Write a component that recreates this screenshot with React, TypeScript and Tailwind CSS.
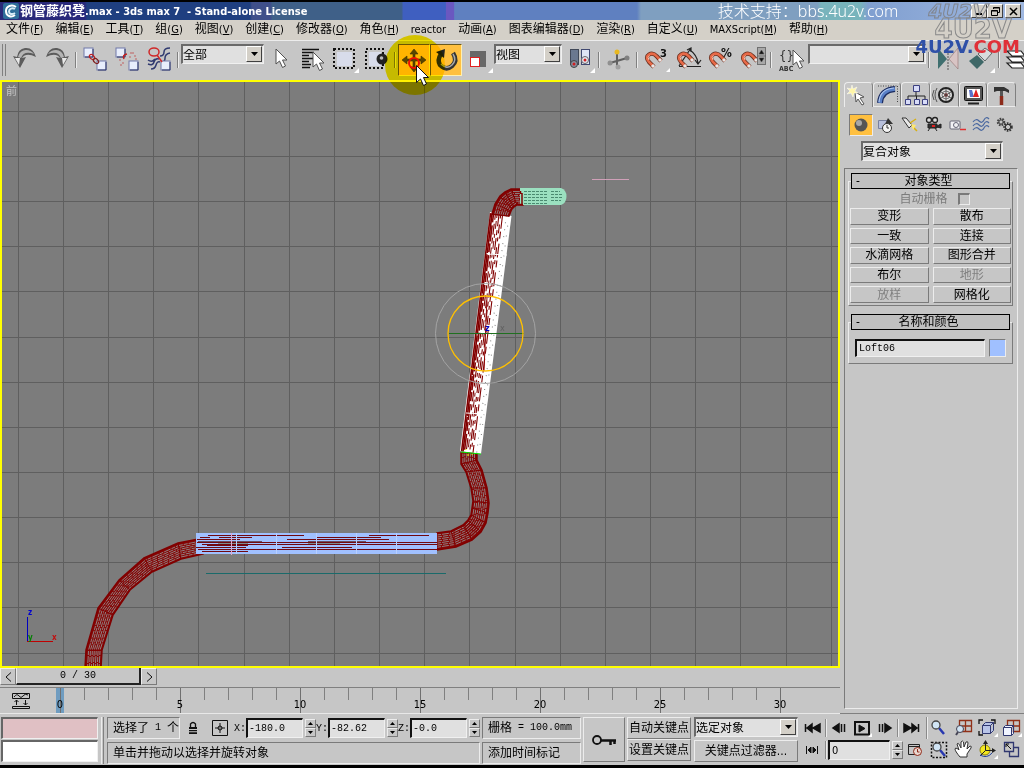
import React from 'react';
import type { ReactNode } from 'react';

type Pt = [number, number];

const raised = 'border border-t-[#ececec] border-l-[#ececec] border-b-[#7a7a7a] border-r-[#7a7a7a]';
const sunken = 'border border-t-[#7a7a7a] border-l-[#7a7a7a] border-b-[#ececec] border-r-[#ececec]';
const field =
  'border-t-2 border-l-2 border-b border-r border-t-[#111] border-l-[#111] border-b-[#f0f0f0] border-r-[#f0f0f0] bg-[#e0e0e0]';

/* ---------- shared controls ---------- */

function Ico({ children, className = 'h-8 w-8', box = '0 0 32 32' }: { children: ReactNode; className?: string; box?: string }) {
  return (
    <svg viewBox={box} className={`block shrink-0 ${className}`} fill="none" aria-hidden="true">
      {children}
    </svg>
  );
}

function Drop({ label, value, className, arrow = 'w-4' }: { label: string; value: string; className: string; arrow?: string }) {
  return (
    <div className={`relative shrink-0 ${className}`}>
      <select
        aria-label={label}
        className="block h-full w-full appearance-none border-t-2 border-l-2 border-r border-b border-t-[#6a6a6a] border-l-[#6a6a6a] border-r-[#f0f0f0] border-b-[#f0f0f0] bg-[#e0e0e0] text-xs leading-none text-black"
      >
        <option>{value}</option>
      </select>
      <span
        className={`pointer-events-none absolute top-0.5 right-0.5 bottom-0.5 flex items-center justify-center border border-t-white border-l-white border-r-[#404040] border-b-[#404040] bg-[#d4d0c8] ${arrow}`}
      >
        <Ico className="h-1 w-[7px]" box="0 0 7 4">
          <path d="M0 0h7L3.5 4z" fill="#000" />
        </Ico>
      </span>
    </div>
  );
}

function Spinner({ label }: { label: string }) {
  return (
    <span className="flex h-[18px] w-[11px] shrink-0 flex-col">
      <button aria-label={`${label} +`} className={`flex flex-1 items-center justify-center ${raised}`}>
        <Ico className="h-[3px] w-[5px]" box="0 0 5 3">
          <path d="M0 3h5L2.5 0z" fill="#000" />
        </Ico>
      </button>
      <button aria-label={`${label} -`} className={`flex flex-1 items-center justify-center ${raised}`}>
        <Ico className="h-[3px] w-[5px]" box="0 0 5 3">
          <path d="M0 0h5L2.5 3z" fill="#000" />
        </Ico>
      </button>
    </span>
  );
}

/* ---------- title and menu ---------- */

function TitleBar() {
  return (
    <header className="relative flex h-[18px] shrink-0 items-center bg-[linear-gradient(90deg,#2a2a78_0%,#28287c_8.3%,#1f3f80_8.5%,#1f3f80_24.4%,#3f4f8a_24.6%,#3f4f8a_26.4%,#3f6088_26.6%,#3f6088_39.2%,#3f5fc0_39.4%,#3f5fc0_43.5%,#6a58c0_43.6%,#6a58c0_44.3%,#5f80c0_44.4%,#5f80c0_62.2%,#7f9fc0_62.6%,#7f9fc0_79.8%,#78b4bc_80.2%,#78b4bc_84%,#809fd0_84.8%,#a0b8e0_100%)] pl-[3px]">
      <Ico className="h-4 w-4" box="0 0 16 16">
        <rect width="16" height="16" rx="2" fill="#2f6f9a" />
        <path d="M13 4C9 1 3 3 3 8s5 7 9 4" stroke="#fff" strokeWidth="2" />
        <path d="M12 6C9 4 6 6 6 8.500s3 3.500 6 1.500" stroke="#d6ecf6" strokeWidth="2" />
      </Ico>
      <h1 className="pl-px text-[11px] font-bold whitespace-pre text-white">
        <span className="text-[13px]">钢管藤织凳</span>.max - 3ds max 7  - Stand-alone License
      </h1>
      <p className="absolute top-0 left-[70.100%] font-['Noto_Sans','Noto_Sans_CJK_SC',sans-serif] text-base leading-[18px] font-light whitespace-nowrap text-white">
        技术支持：bbs.4u2v.com
      </p>
      <div className="ml-auto flex items-center pr-[3px]">
        <button aria-label="最小化" className="flex h-3.5 w-4 items-end justify-center border border-t-white border-l-white border-r-[#404040] border-b-[#404040] bg-[#d4d0c8] pb-0.5">
          <span className="h-0.5 w-1.5 bg-black" />
        </button>
        <button aria-label="还原" className="flex h-3.5 w-4 items-center justify-center border border-t-white border-l-white border-r-[#404040] border-b-[#404040] bg-[#d4d0c8]">
          <Ico className="h-[9px] w-[9px]" box="0 0 9 9">
            <path d="M2.500 2V.5h6v5H7M2.500 1h6M.5 3.500h6v5h-6zM.5 4h6" stroke="#000" />
          </Ico>
        </button>
        <button aria-label="关闭" className="ml-0.5 flex h-3.5 w-4 items-center justify-center border border-t-white border-l-white border-r-[#404040] border-b-[#404040] bg-[#d4d0c8]">
          <Ico className="h-[9px] w-[9px]" box="0 0 9 9">
            <path d="M1 1l7 7M8 1L1 8" stroke="#000" strokeWidth="1.500" />
          </Ico>
        </button>
      </div>
    </header>
  );
}

const menus: [string, string][] = [
  ['文件', 'F'],
  ['编辑', 'E'],
  ['工具', 'T'],
  ['组', 'G'],
  ['视图', 'V'],
  ['创建', 'C'],
  ['修改器', 'O'],
  ['角色', 'H'],
  ['reactor', ''],
  ['动画', 'A'],
  ['图表编辑器', 'D'],
  ['渲染', 'R'],
  ['自定义', 'U'],
  ['MAXScript', 'M'],
  ['帮助', 'H'],
];

function MenuBar() {
  return (
    <nav className="flex h-5 shrink-0 items-center gap-3 bg-[#d4d0c8] pl-1.5">
      {menus.map(([name, key]) => (
        <button key={name} className="text-[11px] whitespace-nowrap">
          <span className={/^[a-z]/i.test(name) ? '' : 'text-xs'}>{name}</span>
          {key && (
            <>
              (<u>{key}</u>)
            </>
          )}
        </button>
      ))}
    </nav>
  );
}

function Watermark() {
  return (
    <div className="pointer-events-none absolute top-0 right-1 z-20 flex flex-col items-end font-['DejaVu_Sans',sans-serif] font-bold" aria-hidden="true">
      <span className="pr-8 text-[20px] leading-[18px] text-transparent italic [-webkit-text-stroke:1px_#80848c]">4U2V</span>
      <span className="pr-2 text-[26px] leading-[19px] text-transparent [-webkit-text-stroke:1px_#8a8a8a]">4U2V</span>
      <span className="text-[18px] leading-[15px] text-[#2f50a8]">
        4U2V.<span className="text-[#e03038]">COM</span>
      </span>
    </div>
  );
}

/* ---------- main toolbar ---------- */

function Tool({ label, children, active = false }: { label: string; children: ReactNode; active?: boolean }) {
  return (
    <button
      aria-label={label}
      className={active ? 'flex h-8 w-8 shrink-0 items-center justify-center border border-t-[#6a5a20] border-l-[#6a5a20] border-r-[#fff0b0] border-b-[#fff0b0] bg-[#ffc040]' : 'h-8 w-8 shrink-0'}
    >
      {children}
    </button>
  );
}

function Sep() {
  return (
    <span className="flex h-8 w-1.5 shrink-0 items-center justify-center">
      <span className="h-4 w-0.5 border-l border-l-[#808080] border-r border-r-[#ececec]" />
    </span>
  );
}

const Flyout = () => <path d="M31 24v5h-5z" fill="#fff" />;

const Arrow = ({ x, y }: { x: number; y: number }) => (
  <path d={`M${x} ${y}v15l3.500-3 3 6.500 3-1.500-3-6h4.500z`} fill="#fff" stroke="#505050" />
);

const Box = ({ x, y }: { x: number; y: number }) => (
  <>
    <rect x={x} y={y} width="9" height="9" fill="#e8eefc" stroke="#7078a8" />
    <path d={`M${x + 9} ${y + 1}v8h-8`} stroke="#30386a" />
  </>
);

const Magnet = () => (
  <>
    <path d="M14 23L9 18Q5 13 9 10.500Q13 8 17 12.500L21 17" stroke="#6a3020" strokeWidth="4.200" />
    <path d="M14 23L9 18Q5 13 9 10.500Q13 8 17 12.500L21 17" stroke="#e86a48" strokeWidth="2.600" />
    <path d="M9 16Q7 13 9.500 11.500" stroke="#ffb8a0" />
    <path d="M14 23l-2-2M21 17l-2-2" stroke="#e8e8e8" strokeWidth="3" />
  </>
);

const CurlArrow = () => (
  <>
    <path d="M4 12l7 12 6-11-4 1Q17 8 27 13Q24 3 16 4Q9 5 8 13z" fill="#5c5c5c" />
    <path d="M9 13Q11 6 17 6Q22 6 25 10Q15 6 12 14" fill="#b4b4b4" />
    <path d="M6 14l4 7 1-7z" fill="#e8e8e8" />
  </>
);

function Toolbar() {
  return (
    <div role="toolbar" className="flex h-10 shrink-0 items-start overflow-hidden border-t border-[#ececec] bg-[#c6c6c6] pt-[3px]">
      <span className="mr-[3px] ml-0.5 h-8 w-1 shrink-0 border-x border-[#808080]" />
      <Tool label="撤销">
        <Ico>
          <CurlArrow />
        </Ico>
      </Tool>
      <Tool label="重做">
        <Ico>
          <g transform="translate(32 0) scale(-1 1)">
            <CurlArrow />
          </g>
        </Ico>
      </Tool>
      <Sep />
      <Tool label="选择并链接">
        <Ico>
          <Box x={5} y={4} />
          <Box x={18} y={17} />
          <ellipse cx="13" cy="13" rx="3" ry="2" transform="rotate(45 13 13)" stroke="#c02020" strokeWidth="1.300" />
          <ellipse cx="17" cy="17" rx="3" ry="2" transform="rotate(45 17 17)" stroke="#802020" strokeWidth="1.300" />
        </Ico>
      </Tool>
      <Tool label="断开链接">
        <Ico>
          <Box x={5} y={4} />
          <Box x={18} y={17} />
          <path d="M16 10q-5 1-3 5" stroke="#c02020" strokeWidth="1.500" />
          <path d="M19 9h2M23 12h2M18 13h2M22 8v2M8 16h2M11 19h2M9 21h2M24 15h2" stroke="#c06060" />
        </Ico>
      </Tool>
      <Tool label="绑定到空间扭曲">
        <Ico>
          <path d="M27 4q-6 0-6 4t-4 4M27 9q-5 1-5 5t-3 4M5 16q4 3 7-1M5 20q5 2 6-2t5-3M8 25q4 0 5-4t4-3" stroke="#303a70" strokeWidth="1.500" />
          <Box x={18} y={17} />
          <ellipse cx="11" cy="8" rx="5" ry="4" stroke="#d02828" strokeWidth="1.500" />
          <path d="M14 11l5 7" stroke="#d02828" strokeWidth="1.500" />
        </Ico>
      </Tool>
      <Sep />
      <Drop label="选择过滤器" value="全部" className="h-5 w-[83px]" />
      <Tool label="选择对象">
        <Ico>
          <Arrow x={12} y={5} />
        </Ico>
      </Tool>
      <Tool label="按名称选择">
        <Ico>
          <path d="M6 5.500h17M6 8.500h12M6 11.500h7M6 14.500h11M6 17.500h7M6 20.500h9M6 23.500h8" stroke="#111" strokeWidth="1.400" />
          <Arrow x={17} y={8} />
        </Ico>
      </Tool>
      <Tool label="矩形选择区域">
        <Ico>
          <rect x="9" y="8" width="15" height="14" fill="#d8dcea" />
          <rect x="6" y="5" width="20" height="19" stroke="#111" strokeWidth="2" strokeDasharray="2 2" />
          <Flyout />
        </Ico>
      </Tool>
      <Tool label="窗口/交叉">
        <Ico>
          <rect x="9" y="8" width="12" height="14" fill="#d8dcea" />
          <rect x="6" y="5" width="17" height="19" stroke="#111" strokeWidth="2" strokeDasharray="2 2" />
          <circle cx="22" cy="15" r="5.500" fill="#222" />
          <circle cx="21.500" cy="14" r="1.800" fill="#bbb" />
        </Ico>
      </Tool>
      <Sep />
      <Tool label="选择并移动" active>
        <Ico className="h-[30px] w-[30px]" box="0 0 30 30">
          <path d="M15 4l4 5h-3v5h6v-3l5 4-5 4v-3h-6v6h3l-4 5-4-5h3v-6H8v3l-5-4 5-4v3h6V9h-3z" fill="#5a4a10" stroke="#3c3408" strokeWidth=".6" />
          <circle cx="15" cy="18" r="5" stroke="#f01010" strokeWidth="2" />
        </Ico>
      </Tool>
      <Tool label="选择并旋转" active>
        <Ico className="h-[30px] w-[30px]" box="0 0 30 30">
          <path d="M22 8q5 8-1 13t-12-1q-3-5 1-11" stroke="#333" strokeWidth="4.500" />
          <path d="M22 9q4 6-1 11t-11-1" stroke="#a8a8a8" strokeWidth="1.500" />
          <path d="M5 7l9-3-1 9z" fill="#222" />
        </Ico>
      </Tool>
      <Tool label="选择并缩放">
        <Ico>
          <rect x="8" y="7" width="16" height="16" fill="#686868" />
          <rect x="8.500" y="13.500" width="9" height="9" fill="#fff" stroke="#e02020" />
          <Flyout />
        </Ico>
      </Tool>
      <Drop label="参考坐标系" value="视图" className="h-5 w-[68px]" />
      <span className="w-0.5 shrink-0" />
      <Tool label="使用轴点中心">
        <Ico>
          <rect x="6.500" y="5.500" width="8" height="15" fill="#6a7890" stroke="#404858" />
          <rect x="17.500" y="5.500" width="8" height="15" fill="#dfe4f4" stroke="#404870" />
          <circle cx="10" cy="20" r="3.500" fill="#8890a0" stroke="#444" />
          <circle cx="21" cy="16" r="3.500" fill="#e8e8f4" stroke="#666" />
          <circle cx="10" cy="20" r="1.500" fill="#d02020" />
          <circle cx="21" cy="16" r="1.500" fill="#d02020" />
          <Flyout />
        </Ico>
      </Tool>
      <Sep />
      <Tool label="选择并操纵">
        <Ico>
          <path d="M15 8v16M8 19l17-5" stroke="#606060" strokeWidth="2" />
          <circle cx="15" cy="8" r="2.500" fill="#e8b820" />
          <circle cx="8" cy="19" r="2.500" fill="#909090" />
          <circle cx="25" cy="14" r="2.500" fill="#808080" />
          <circle cx="16" cy="23" r="2.500" fill="#a0a0a0" />
        </Ico>
      </Tool>
      <Sep />
      <Tool label="捕捉开关">
        <Ico>
          <Magnet />
          <text x="20" y="13" fontSize="11" fontWeight="bold" fill="#111">
            3
          </text>
          <path d="M30 24v4h-4z" fill="#fff" />
        </Ico>
      </Tool>
      <Tool label="角度捕捉">
        <Ico>
          <path d="M7 22L19 4M7 22.500h22M18 6q7 5 8 13M15 6l4-2v4M23 16l3 4 3-4" stroke="#222" strokeWidth="1.200" />
          <Magnet />
        </Ico>
      </Tool>
      <Tool label="百分比捕捉">
        <Ico>
          <Magnet />
          <text x="17" y="13" fontSize="12" fontWeight="bold" fill="#111">
            %
          </text>
        </Ico>
      </Tool>
      <Tool label="微调器捕捉">
        <Ico>
          <Magnet />
          <rect x="21.500" y="3.500" width="8" height="17" fill="#a8a8a8" stroke="#707070" />
          <path d="M23 10l2.500-4 2.500 4zM23 14l2.500 4 2.500-4zM22 12h8" fill="#111" stroke="#555" strokeWidth=".6" />
        </Ico>
      </Tool>
      <Sep />
      <Tool label="编辑命名选择集">
        <Ico>
          <text x="5" y="16" fontSize="13" fill="#333">
            {'{}'}
          </text>
          <text x="5" y="27" fontSize="7" fontWeight="bold" fill="#333">
            ABC
          </text>
          <Arrow x={19} y={6} />
        </Ico>
      </Tool>
      <span className="w-0.5 shrink-0" />
      <Drop label="命名选择集" value="" className="h-5 w-[118px]" />
      <Sep />
      <Tool label="镜像">
        <Ico>
          <path d="M6 4v21l9-10z" fill="#3f6f6f" />
          <path d="M26 4v21l-9-10z" fill="#d8c4c4" stroke="#907070" strokeWidth=".6" />
          <path d="M16 3v24" stroke="#555" strokeDasharray="2 1" />
        </Ico>
      </Tool>
      <Tool label="对齐">
        <Ico>
          <path d="M5 17l8-6 7 7-7 7z" fill="#3f6868" />
          <path d="M14 10l7-6 7 5-7 8z" fill="#d8dcdc" stroke="#606868" />
          <Flyout />
        </Ico>
      </Tool>
      <Sep />
      <Tool label="层管理器">
        <Ico>
          <path d="M5 7h14l4 5H10zM5 13h14l4 5H10zM5 19h14l4 5H10z" fill="#fff" stroke="#222" strokeWidth="1.200" />
        </Ico>
      </Tool>
    </div>
  );
}

/* ---------- viewport scene ---------- */

const lerp = (a: Pt, b: Pt, t: number): Pt => [a[0] + (b[0] - a[0]) * t, a[1] + (b[1] - a[1]) * t];
const toPoints = (pts: Pt[]) => pts.map((p) => p.join(',')).join(' ');

function Tube({ outer, inner }: { outer: Pt[]; inner: Pt[] }) {
  const gaps = [0.16, 0.28, 0.4, 0.52, 0.64, 0.76, 0.88];
  return (
    <g>
      <polygon points={toPoints([...outer, ...[...inner].reverse()])} fill="#850505" stroke="#800000" strokeWidth="1.500" />
      {gaps.map((t, i) => (
        <polyline
          key={t}
          points={toPoints(outer.map((p, k) => lerp(p, inner[k], t)))}
          fill="none"
          stroke="#908080"
          strokeDasharray={i % 2 ? '5 1' : '4 1 7 1'}
        />
      ))}
      {outer.map((p, k) => (
        <line key={k} x1={p[0]} y1={p[1]} x2={inner[k][0]} y2={inner[k][1]} stroke="#800000" />
      ))}
    </g>
  );
}

const leftOuter: Pt[] = [[85, 668], [86, 650], [98, 608], [119, 580], [144, 558], [178, 543], [198, 539]];
const leftInner: Pt[] = [[101, 668], [102, 650], [113, 615], [130, 590], [152, 572], [181, 559], [203, 554]];
const bendOuter: Pt[] = [[437, 550], [456, 547], [472, 540], [481, 532], [486, 523], [488, 513], [489, 503], [487, 488], [482, 470], [477, 460], [477, 453]];
const bendInner: Pt[] = [[437, 533], [451, 531], [463, 525], [468, 520], [471, 515], [472, 508], [473, 501], [471, 488], [466, 472], [461, 464], [461, 453]];
const topOuter: Pt[] = [[492, 214], [495, 204], [500, 196], [505, 192], [511, 189], [522, 189]];
const topInner: Pt[] = [[509, 216], [511, 211], [512, 209], [514, 207], [517, 205], [523, 205]];

const gridX = [18, 63, 108, 153, 198, 244, 289, 334, 379, 424, 469, 515, 560, 605, 650, 695, 740, 786, 831];
const gridY = [111, 156, 201, 246, 291, 337, 382, 427, 472, 517, 562, 607, 653];

const whiteStrands: [number, string, string][] = [
  [0.03, '#800000', ''],
  [0.1, '#800000', '40 1'],
  [0.17, '#850505', '9 3 16 2'],
  [0.26, '#800000', '6 4 11 3'],
  [0.34, '#8a2020', '4 3 8 5'],
  [0.43, '#800000', '12 4 5 3'],
  [0.51, '#800000', '4 6 9 4'],
  [0.6, '#800000', '14 3 7 5'],
  [0.78, '#8a8a8a', '1 6'],
  [0.9, '#8a8a8a', '1 9'],
];

const blueStrands: [number, number, number][] = [
  [208, 304, 535.5], [369, 429, 535.5], [200, 210, 537.5], [219, 252, 537.5], [316, 381, 537.5],
  [197, 240, 539.5], [287, 389, 539.5], [198, 262, 541.5], [308, 366, 541.5], [197, 437, 542.5],
  [202, 437, 544.5], [207, 248, 545.5], [196, 246, 547.5], [282, 352, 547.5], [198, 437, 549.5], [202, 248, 551.5],
];

function Viewport() {
  return (
    <section aria-label="前视图" className="relative min-h-0 flex-1 border-2 border-[#ffff00] bg-[#7c7c7c]">
      <svg viewBox="2 82 836 584" preserveAspectRatio="xMidYMid slice" className="absolute inset-0 h-full w-full" fill="none">
        <path
          d={gridX.map((x) => `M${x + 0.5} 82V666`).join('') + gridY.map((y) => `M2 ${y + 0.5}H838`).join('')}
          stroke="#5f5f5f"
        />
        <text x="6" y="95" fontSize="11" fill="#c4c4c4">
          前
        </text>
        <path d="M592 179.500h37" stroke="#d0a0b8" />
        <path d="M206 573.500h240" stroke="#1a6a6a" />

        <Tube outer={leftOuter} inner={leftInner} />
        <Tube outer={bendOuter} inner={bendInner} />

        <rect x="196" y="533" width="241" height="21" fill="#a0c0ff" />
        {blueStrands.map(([a, b, y]) => (
          <path key={`${a}-${y}`} d={`M${a} ${y}H${b}`} stroke={y === 541.5 ? '#6a5060' : '#700810'} />
        ))}
        <path d="M218 543.500h30M308 543.500h32" stroke="#7c8c8c" />
        <path d="M236.500 533v21M276.500 533v21M316.500 533v21M356.500 533v21M396.500 533v21" stroke="#b8d0ff" />
        <path d="M231.500 533v22" stroke="#e0a8d0" />

        <polygon points="490,212 511.500,216 481,454 460,451" fill="#fff" />
        {whiteStrands.map(([t, color, dash]) => {
          const a = lerp([490, 213], [511, 216], t);
          const b = lerp([461, 451], [481, 454], t);
          return <line key={t} x1={a[0]} y1={a[1]} x2={b[0]} y2={b[1]} stroke={color} strokeWidth={t < 0.2 ? 1.6 : 1.1} strokeDasharray={dash} />;
        })}
        <path d="M487 254l20 1M466 413l19 1" stroke="#fff" />
        <path d="M461 452l20 2" stroke="#00f000" />
        <path d="M466 449v1M468 454v2M472 454v1" stroke="#f0f000" />

        <Tube outer={topOuter} inner={topInner} />
        <path d="M520 188h41q5.500 2 5.500 8.500t-5.500 8.500h-41z" fill="#9be0c0" />
        <path d="M524 191.500h24M524 194.500h24M524 197.500h24M524 200.500h24M524 203.500h24" stroke="#4a8a70" strokeDasharray="3 1" />
        <path d="M551 191.500h9M551 194.500h12M551 197.500h12M551 200.500h10" stroke="#4a8a70" strokeDasharray="3 1" />
        <path d="M520.500 191v3M522 193v11M518 204.500h5" stroke="#800000" strokeWidth="1.500" />

        <circle cx="485.5" cy="333.5" r="50" stroke="#a4a4a4" />
        <path d="M487 297L484 371" stroke="#900808" />
        <path d="M449 333.500h75" stroke="#207020" />
        <circle cx="485.5" cy="333.5" r="37.500" stroke="#ffc000" strokeWidth="1.300" />
        <text x="500" y="331" fontSize="9" fill="#606060">
          x
        </text>
        <text x="485" y="331" fontSize="9" fontWeight="bold" fill="#0000c0">
          z
        </text>

        <path d="M27.500 617v25" stroke="#0000c0" />
        <path d="M27 641.500h26" stroke="#c00000" />
        <g fontSize="8" fontWeight="bold">
          <text x="28" y="615" fill="#0000d0">
            z
          </text>
          <text x="28" y="640" fill="#008000">
            y
          </text>
          <text x="52" y="640" fill="#c01010">
            x
          </text>
        </g>
      </svg>
    </section>
  );
}

function TrackBar() {
  const frames = Array.from({ length: 31 }, (_, i) => i);
  return (
    <div className="shrink-0 bg-[#c6c6c6]">
      <div className="flex h-[19px] items-start">
        <button aria-label="上一帧" className={`flex h-[17px] w-4 items-center justify-center ${raised}`}>
          <Ico className="h-2.5 w-[7px]" box="0 0 7 10">
            <path d="M6 .5L1 5l5 4.500" stroke="#111" />
          </Ico>
        </button>
        <button className="h-[17px] w-[125px] border-r-2 border-b-2 border-l border-r-[#222] border-b-[#222] border-l-[#ececec] font-['Liberation_Mono',monospace] text-[10px] leading-none whitespace-pre">
          0 / 30
        </button>
        <button aria-label="下一帧" className={`flex h-[17px] w-4 items-center justify-center ${raised}`}>
          <Ico className="h-2.5 w-[7px]" box="0 0 7 10">
            <path d="M1 .5L6 5 1 9.500" stroke="#111" />
          </Ico>
        </button>
      </div>
      <div className="relative flex h-[27px] border-t border-b border-t-[#808080] border-b-[#e8e8e8] px-12">
        <button aria-label="打开迷你曲线编辑器" className="absolute top-1 left-3">
          <Ico className="h-[18px] w-[18px]" box="0 0 18 18">
            <path d="M.5 1.500h17v5H.5zM2 5q3-4 5-1t4 0 5-1M.5 14.500h17v2H.5z" stroke="#111" />
            <path d="M4.500 13V8M2.500 10l2-2 2 2M13.500 8v5M11.500 11l2 2 2-2" stroke="#111" />
          </Ico>
        </button>
        {frames.map((f) => (
          <div key={f} className={`flex flex-1 justify-center ${f === 0 ? 'relative' : ''}`}>
            {f === 0 && <span className="absolute inset-y-0 w-2 bg-[#6f9cc0]" />}
            {f % 5 ? (
              <span className="h-3 w-px bg-[#808080]" />
            ) : (
              <span className="relative flex w-px justify-center bg-[#707070]">
                <span className="absolute bottom-0.5 font-['DejaVu_Sans_Condensed','DejaVu_Sans',sans-serif] text-[11px] leading-[13px]">{f}</span>
              </span>
            )}
          </div>
        ))}
      </div>
    </div>
  );
}

/* ---------- command panel ---------- */

const tabIcons: [string, ReactNode][] = [
  [
    '创建',
    <>
      <path d="M11 11l9 5-4 1 4 6-2 1-4-6-2 3z" fill="#fff" stroke="#555" />
      <path d="M8 4l1 4 4-2-2 4 3 2-4 0-1 4-2-4-4 1 3-3-3-3 4 1z" fill="#fff6a8" stroke="#fff" strokeWidth=".5" />
    </>,
  ],
  [
    '修改',
    <>
      <path d="M5 5h19M24.500 5v17" stroke="#444" strokeDasharray="1 1.500" />
      <path d="M7 22Q8 9 22 8" stroke="#1c2c60" strokeWidth="6" />
      <path d="M7 22Q8 9 22 8" stroke="#5a80c8" strokeWidth="3.500" />
      <path d="M6 21Q7 8 21 7" stroke="#b0c8f0" strokeWidth="1.200" />
    </>,
  ],
  [
    '层次',
    <>
      <path d="M14 10v5M6 19v-4h17v4M14.500 15v4" stroke="#222" />
      <path d="M11.500 4.500h6v6h-6zM3.500 18.500h5v5h-5zM12.500 18.500h5v5h-5zM20.500 18.500h5v5h-5z" fill="#d8dcf8" stroke="#3c4080" />
    </>,
  ],
  [
    '运动',
    <>
      <circle cx="16" cy="14" r="7" fill="#e0e0e0" stroke="#222" strokeWidth="2" />
      <circle cx="16" cy="14" r="4" stroke="#777" />
      <circle cx="16" cy="14" r="1.800" fill="#a02020" />
      <path d="M11 11l10 6M11 17l10-6M16 8v12" stroke="#444" strokeWidth=".8" />
      <path d="M7 7q-4 7 0 14M4 9q-3 5 0 10" stroke="#555" />
    </>,
  ],
  [
    '显示',
    <>
      <rect x="5.500" y="5.500" width="18" height="14" rx="1" fill="#555" stroke="#111" />
      <rect x="8" y="8" width="13" height="9" fill="#fff" />
      <path d="M10 9h3l2 7h-4z" fill="#5a70c8" />
      <path d="M17 8l3 8h-6z" fill="#e02020" />
      <path d="M9 22.500h11" stroke="#222" strokeWidth="2" />
    </>,
  ],
  [
    '工具',
    <>
      <path d="M6 6h10l5 3v3l-4-2H9L6 11z" fill="#333" />
      <path d="M13.500 10v6" stroke="#555" strokeWidth="3" />
      <path d="M13.500 15v9" stroke="#8c2a1a" strokeWidth="3.500" />
    </>,
  ],
];

const categories: [string, ReactNode][] = [
  [
    '几何体',
    <>
      <circle cx="11" cy="11" r="6.500" fill="#555" />
      <circle cx="9" cy="9" r="3" fill="#a8a8a8" />
    </>,
  ],
  [
    '图形',
    <>
      <path d="M4.500 6.500h9v8h-9z" fill="#b8c0dc" stroke="#7880a0" />
      <path d="M14 4l5 6h-8z" fill="#333" />
      <circle cx="13" cy="14" r="4.500" fill="#f4f4f4" stroke="#333" />
      <path d="M13 11v3h2" stroke="#333" />
    </>,
  ],
  [
    '灯光',
    <>
      <path d="M4 4l4 0 6 7-3 3z" fill="#e8e8e8" stroke="#333" />
      <path d="M12 9l6-4M14 12l5 5" stroke="#d8b010" strokeWidth="1.500" />
      <path d="M13 10l5 1-3 5z" fill="#ffe870" />
    </>,
  ],
  [
    '摄影机',
    <>
      <circle cx="7" cy="6" r="2.500" fill="#ddd" stroke="#222" strokeWidth="1.300" />
      <circle cx="13" cy="6" r="2.500" fill="#ddd" stroke="#222" strokeWidth="1.300" />
      <path d="M6 10h9v4H6zM15 12l4-2v4l-4-1M8 14l-2 3M13 14l2 3" fill="#333" stroke="#222" />
      <path d="M10 12h3" stroke="#e02020" strokeWidth="2" />
    </>,
  ],
  [
    '辅助对象',
    <>
      <rect x="4" y="7" width="10" height="8" rx="1" fill="#f0f0f4" stroke="#667" />
      <circle cx="10" cy="11" r="2.500" stroke="#667" />
      <path d="M14 15.500h6" stroke="#e03030" strokeWidth="1.500" />
    </>,
  ],
  [
    '空间扭曲',
    <path key="w" d="M3 8q3-4 6-1t5-1 5-1M3 12q3-4 6-1t5-1 5-1M3 16q3-4 6-1t5-1 5-1" stroke="#4a68a0" strokeWidth="1.200" />,
  ],
  [
    '系统',
    <>
      <circle cx="7" cy="8" r="3" stroke="#444" strokeWidth="2.500" strokeDasharray="1.500 1" />
      <circle cx="14" cy="13" r="3.500" stroke="#333" strokeWidth="2.500" strokeDasharray="1.500 1" />
      <circle cx="7" cy="8" r="2.200" stroke="#444" />
      <circle cx="14" cy="13" r="2.700" stroke="#333" />
    </>,
  ],
];

function Rollup({ title, children }: { title: string; children: ReactNode }) {
  return (
    <section className="relative">
      <div className={`mt-2 px-[3px] pt-2 pb-0.5 ${raised}`}>{children}</div>
      <button className="absolute top-0 right-[3px] left-[3px] flex h-4 items-center border border-black bg-[#c0c0c0] text-xs leading-none">
        <span className="w-3">-</span>
        <span className="flex-1 pr-4 text-center">{title}</span>
      </button>
    </section>
  );
}

const objectTypes: [string, boolean][] = [
  ['变形', true],
  ['散布', true],
  ['一致', true],
  ['连接', true],
  ['水滴网格', true],
  ['图形合并', true],
  ['布尔', true],
  ['地形', false],
  ['放样', false],
  ['网格化', true],
];

function CommandPanel() {
  return (
    <aside className="flex w-[184px] shrink-0 flex-col border-b border-[#808080] bg-[#c6c6c6] pt-0.5 pr-1.5 pb-1 pl-1">
      <div className="flex h-[25px] pr-0.5" role="tablist">
        {tabIcons.map(([name, icon], i) => (
          <button
            key={name}
            role="tab"
            aria-label={name}
            aria-selected={i === 0}
            className={
              i === 0
                ? 'flex flex-1 items-center justify-center rounded-t-sm border-t border-r border-l border-t-[#ececec] border-r-[#808080] border-l-[#ececec]'
                : 'flex flex-1 items-center justify-center rounded-t-sm border border-t-[#ececec] border-r-[#808080] border-b-[#ececec] border-l-[#ececec]'
            }
          >
            <Ico className="h-6 w-[26px]" box="1 2 26 24">
              {icon}
            </Ico>
          </button>
        ))}
      </div>
      <div className="mt-[7px] flex pl-[5px]">
        {categories.map(([name, icon], i) => (
          <button key={name} aria-label={name} className={i === 0 ? `flex h-[22px] w-6 items-center justify-center bg-[#ffc040] ${sunken}` : 'flex h-[22px] w-6 items-center justify-center'}>
            <Ico className="h-[22px] w-[22px]" box="0 0 22 22">
              {icon}
            </Ico>
          </button>
        ))}
      </div>
      <Drop label="对象类别" value="复合对象" className="mt-[5px] ml-[17px] h-5 w-[142px]" />
      <div className="mt-[7px] flex-1 border border-t-[#7a7a7a] border-r-[#ececec] border-b-[#ececec] border-l-[#7a7a7a] pt-1 pr-1 pl-[3px]">
        <div className="flex flex-col gap-2">
          <Rollup title="对象类型">
            <label className="flex h-[18px] items-center justify-center gap-2.5 pl-2 text-xs leading-none text-[#7c7c7c]">
              自动栅格
              <input type="checkbox" disabled className={`h-3 w-3 appearance-none ${sunken} border-t-2 border-l-2`} />
            </label>
            <div className="-mx-0.5 grid h-[95px] grid-cols-2 grid-rows-5 gap-x-1 gap-y-[3px]">
              {objectTypes.map(([name, on]) => (
                <button key={name} disabled={!on} className={`text-xs leading-none disabled:text-[#808080] ${raised}`}>
                  {name}
                </button>
              ))}
            </div>
          </Rollup>
          <Rollup title="名称和颜色">
            <div className="flex h-[30px] items-end justify-between px-[3px] pb-1">
              <input
                aria-label="名称"
                defaultValue="Loft06"
                className={`h-[18px] min-w-0 flex-1 ${field} pl-0.5 font-['Liberation_Mono',monospace] text-[10px] leading-none`}
              />
              <button aria-label="颜色" className={`ml-1 h-[18px] w-[17px] bg-[#a0c0ff] ${sunken}`} />
            </div>
          </Rollup>
        </div>
      </div>
    </aside>
  );
}

/* ---------- status bar ---------- */

function Coord({ axis, value }: { axis: string; value: string }) {
  return (
    <label className="flex w-[82px] items-center font-['Liberation_Mono',monospace] text-[10px]">
      <span className="w-3 text-right">{axis}:</span>
      <input defaultValue={value} className={`h-5 w-[57px] ${field} pl-px leading-none`} />
      <span className="w-0.5" />
      <Spinner label={axis} />
    </label>
  );
}

const playIcons: Record<string, ReactNode> = {
  转至开头: <path d="M1.500 2v8M8 2v8L3 6zM16 2v8L9 6zM8 6h8" fill="#111" stroke="#111" strokeWidth="1.500" />,
  上一帧: <path d="M8 2v8L2 6zM10.500 2v8M13.500 2v8" fill="#111" stroke="#111" strokeWidth="1.500" />,
  下一帧: <path d="M9 2v8l6-4zM6.500 2v8M3.500 2v8" fill="#111" stroke="#111" strokeWidth="1.500" />,
  转至结尾: <path d="M15.500 2v8M9 2v8l5-4zM1 2v8l7-4zM1 6h8" fill="#111" stroke="#111" strokeWidth="1.500" />,
};

function PlayButton({ name, className }: { name: string; className: string }) {
  return (
    <button aria-label={name} className={`flex items-center justify-center ${className}`}>
      <Ico className="h-3 w-[17px]" box="0 0 17 12">
        {playIcons[name]}
      </Ico>
    </button>
  );
}

const Lens = ({ x, y }: { x: number; y: number }) => (
  <>
    <path d={`M${x + 3} ${y + 3}l5 6`} stroke="#2838b0" strokeWidth="2.500" />
    <circle cx={x} cy={y} r="4" fill="#d0e4f4" stroke="#444" strokeWidth="1.300" />
  </>
);

const NavFlyout = () => <path d="M22 16v4h-4z" fill="#fff" />;

const navIcons: [string, ReactNode][] = [
  ['缩放', <Lens key="z" x={8} y={8} />],
  [
    '缩放所有视图',
    <>
      <path d="M7.500 3.500h12v11h-12zM13.500 3v11M7 9h12" stroke="#903018" strokeWidth="1.300" />
      <circle cx="8" cy="12" r="3.500" fill="#d0e4f4" stroke="#445" />
      <path d="M6 15l-2 3" stroke="#445" strokeWidth="2" />
    </>,
  ],
  [
    '最大化显示',
    <>
      <path d="M3 7V3h4M15 3h4v4M3 14v4h4" stroke="#111" strokeWidth="1.300" />
      <path d="M6.500 8.500h8v8h-8zM6.500 8.500l3-3h8l-3 3M14.500 16.500l3-3v-8" fill="#b8c4e8" stroke="#303870" />
      <NavFlyout />
    </>,
  ],
  [
    '所有视图最大化显示',
    <>
      <path d="M7.500 3.500h12v11h-12zM13.500 3v11M7 9h12" stroke="#903018" strokeWidth="1.300" />
      <path d="M3.500 10.500h8v8h-8zM3.500 10.500l2-2h8l-2 2M11.500 18.500l2-2v-8" fill="#f0f4ff" stroke="#303870" />
      <NavFlyout />
    </>,
  ],
  [
    '缩放区域',
    <>
      <rect x="3.500" y="3.500" width="15" height="15" stroke="#111" strokeDasharray="2 1.500" strokeWidth="1.500" />
      <Lens x={9} y={8} />
    </>,
  ],
  [
    '平移视图',
    <path
      key="p"
      d="M8 18q-5-6-5-8t3 0l1 1L5 5q1-2 2.500 1L9 9 9 3q1.500-2 2.500 0l.5 5 2-5q2-1 2 1l-1 6 3-3q2 0 1 2l-4 6v3z"
      fill="#fff"
      stroke="#333"
    />,
  ],
  [
    '弧形旋转',
    <>
      <circle cx="9" cy="11" r="5" fill="#f4e820" stroke="#8a8010" />
      <path d="M9.500 3v8.500M9.500 11.500H18M9.500 11.500L4 17" stroke="#222" />
      <path d="M9.500 1l-2.500 4h5zM20 11.500l-4-2.500v5z" fill="#222" />
      <path d="M4 16q7 4 12-2" stroke="#20409a" />
      <NavFlyout />
    </>,
  ],
  [
    '最大化视口切换',
    <>
      <path d="M4.500 3.500h9v9h-9z" stroke="#303870" strokeWidth="1.300" />
      <path d="M13 8.500h5.500v9h-9V13" stroke="#303870" strokeWidth="1.300" />
      <path d="M6 5l5 5M6 8V5h3" stroke="#111" />
    </>,
  ],
];

const VLine = () => <span className="h-[18px] w-0.5 shrink-0 self-center border-l border-l-[#8a8a8a] border-r border-r-[#ececec]" />;

function StatusBar() {
  const box = `flex items-center pl-[5px] text-xs leading-none whitespace-pre ${sunken}`;
  const keyBtn = `flex h-[22px] items-center justify-center text-xs leading-none whitespace-nowrap ${raised}`;
  return (
    <footer className="flex h-[51px] shrink-0 items-start bg-[#c6c6c6] pt-[3px]">
      <div className="flex w-[98px] shrink-0 flex-col gap-px pl-px">
        <input aria-label="宏录制器" className="h-[22px] w-full border-t-2 border-l-2 border-r border-b border-t-[#666] border-l-[#666] border-r-[#f0f0f0] border-b-[#f0f0f0] bg-[#e0c0c4]" />
        <input aria-label="脚本侦听器" className="h-[22px] w-full border-t-2 border-l-2 border-r border-b border-t-[#666] border-l-[#666] border-r-[#f0f0f0] border-b-[#f0f0f0] bg-white" />
      </div>
      <span className="mx-[3px] h-[47px] w-[3px] shrink-0 border-x border-l-[#ececec] border-r-[#808080]" />
      <div className="flex min-w-0 flex-1 flex-col gap-[3px]">
        <div className="flex h-[22px] items-center">
          <div className={`${box} h-[22px] min-w-0 flex-1 overflow-hidden`}>
            选择了<span className="font-['Liberation_Mono',monospace] text-[10px]"> 1 </span>个
          </div>
          <button aria-label="选择锁定切换" className="flex w-[26px] justify-center">
            <Ico className="h-3.5 w-2.5" box="0 0 10 14">
              <path d="M2.500 6V3q2.500-3 5 0v3" stroke="#111" strokeWidth="1.300" />
              <path d="M1 6h8v2H1zM1 9h8v1.200H1zM1 11.200h8V13H1z" fill="#111" />
            </Ico>
          </button>
          <button aria-label="绝对模式" className="flex w-7 justify-center">
            <Ico className="h-4 w-4" box="0 0 16 16">
              <path d="M.5.5h15v15H.5zM8 3v10M3 8h10" stroke="#111" />
              <circle cx="8" cy="8" r="2" fill="#777" stroke="#111" />
            </Ico>
          </button>
          <Coord axis="X" value="-180.0" />
          <Coord axis="Y" value="-82.62" />
          <Coord axis="Z" value="-0.0" />
        </div>
        <div className={`${box} h-[22px]`}>单击并拖动以选择并旋转对象</div>
      </div>
      <div className="ml-0.5 flex w-[99px] shrink-0 flex-col gap-[3px]">
        <div className={`${box} h-[22px]`}>
          栅格<span className="font-['Liberation_Mono',monospace] text-[10px]"> = 100.0mm</span>
        </div>
        <div className={`${box} h-[22px]`}>添加时间标记</div>
      </div>
      <button aria-label="设置关键点" className={`ml-0.5 flex h-[45px] w-[42px] shrink-0 items-center justify-center ${raised}`}>
        <Ico className="h-3 w-6" box="0 0 24 12">
          <circle cx="5" cy="6" r="4" stroke="#111" strokeWidth="1.800" />
          <path d="M9 6.500h15M18.500 6v5M22.500 6v4" stroke="#111" strokeWidth="2.500" />
        </Ico>
      </button>
      <div className="ml-0.5 flex w-16 shrink-0 flex-col">
        <button className={keyBtn}>自动关键点</button>
        <button className={keyBtn}>设置关键点</button>
      </div>
      <div className="ml-[3px] flex w-[104px] shrink-0 flex-col gap-[3px]">
        <Drop label="关键点选择集" value="选定对象" className="h-5 w-full" />
        <button className={keyBtn}>关键点过滤器...</button>
      </div>
      <div className="ml-px flex w-[127px] shrink-0 flex-col">
        <div className="flex h-[22px] items-stretch">
          <PlayButton name="转至开头" className="w-[26px]" />
          <VLine />
          <PlayButton name="上一帧" className="w-[25px]" />
          <button aria-label="播放动画" className="flex w-5 items-center justify-center">
            <Ico className="h-[17px] w-[19px]" box="0 0 19 17">
              <path d="M2 2h14v12.500H2z" stroke="#111" strokeWidth="2" />
              <path d="M6 5v7l6-3.500z" fill="#111" stroke="#111" />
              <path d="M19 13v4h-4z" fill="#fff" />
            </Ico>
          </button>
          <PlayButton name="下一帧" className="w-[25px]" />
          <VLine />
          <PlayButton name="转至结尾" className="w-[25px]" />
        </div>
        <div className="flex h-[22px] items-center">
          <button aria-label="关键点模式切换" className="flex w-[26px] justify-center">
            <Ico className="h-2 w-3" box="0 0 12 8">
              <path d="M.5 0v8M11.500 0v8M5 1v6L2 4zM7 1v6l3-3z" fill="#111" stroke="#111" />
            </Ico>
          </button>
          <VLine />
          <input aria-label="当前帧" defaultValue="0" className={`ml-px h-5 w-[62px] ${field} pl-0.5 text-[11px] leading-none`} />
          <span className="w-0.5" />
          <Spinner label="当前帧" />
          <button aria-label="时间配置" className="ml-0.5 flex w-5 justify-center">
            <Ico className="h-3.5 w-3.5" box="0 0 14 14">
              <path d="M.5 1.500h11v10H.5zM.5 3.500h11" stroke="#222" />
              <circle cx="9.500" cy="8.500" r="4" fill="#e8d8d0" stroke="#902818" />
              <path d="M9.500 6v3h2" stroke="#902818" />
            </Ico>
          </button>
        </div>
      </div>
      <span className="h-[22px] w-0.5 border-l border-l-[#8a8a8a] border-r border-r-[#ececec]" />
      <div className="grid shrink-0 grid-cols-4">
        {navIcons.map(([name, icon]) => (
          <button key={name} aria-label={name} className="flex h-[22px] w-6 items-center justify-center">
            <Ico className="h-[22px] w-6" box="0 0 24 22">
              {icon}
            </Ico>
          </button>
        ))}
      </div>
    </footer>
  );
}

function Pointer() {
  return (
    <>
      <div className="pointer-events-none absolute top-[33px] left-[385px] z-30 h-[60px] w-[60px] rounded-full bg-[#fff000] mix-blend-multiply" />
      <svg viewBox="0 0 16 22" className="pointer-events-none absolute top-[62px] left-[415px] z-40 h-[22px] w-4" aria-hidden="true">
        <path d="M1.500 1.500v17l4-3.500 3 6.500 3-1.500-3-6.500h5z" fill="#fff" stroke="#111" />
      </svg>
    </>
  );
}

export default function App() {
  return (
    <div className="relative isolate flex h-screen min-w-[1024px] flex-col overflow-hidden border-t-2 border-b-[3px] border-black bg-[#c6c6c6] font-['DejaVu_Sans_Condensed','Noto_Sans_CJK_SC',sans-serif] text-black">
      <TitleBar />
      <MenuBar />
      <Toolbar />
      <main className="flex min-h-0 flex-1">
        <div className="flex min-w-0 flex-1 flex-col">
          <Viewport />
          <TrackBar />
        </div>
        <CommandPanel />
      </main>
      <StatusBar />
      <Watermark />
      <Pointer />
    </div>
  );
}
